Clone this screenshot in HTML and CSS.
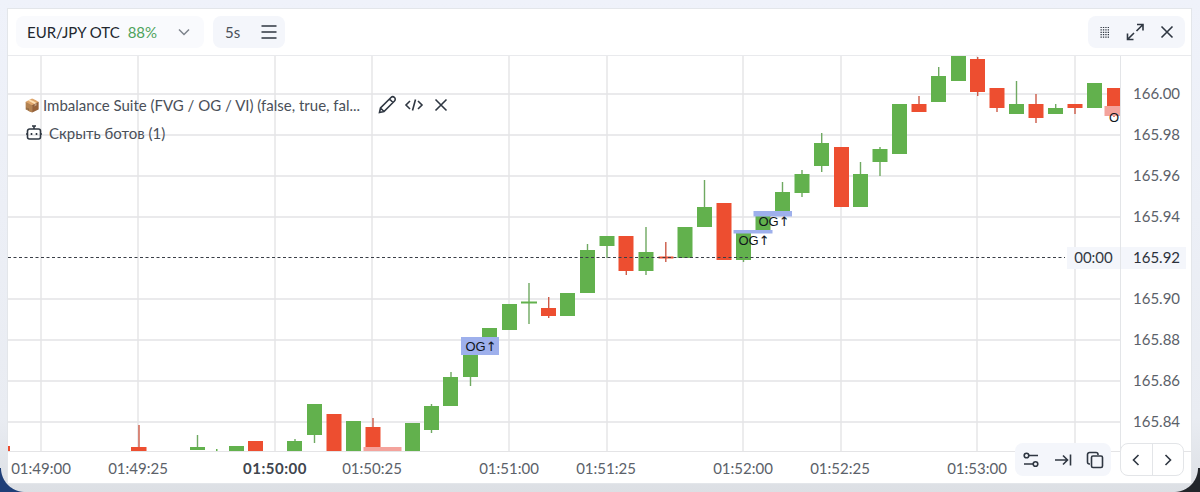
FILE: index.html
```html
<!DOCTYPE html>
<html lang="ru">
<head>
<meta charset="utf-8">
<title>Chart</title>
<link rel="stylesheet" href="styles.css">
</head>
<body>
<main class="panel">
  <header class="topbar">
    <div class="group asset">
      <span class="pair">EUR/JPY OTC</span>
      <span class="payout">88%</span>
      <svg class="chev" width="16" height="16" viewBox="0 0 16 16"><path d="M3 5.500 8 10.500 13 5.500"/></svg>
    </div>
    <div class="group interval">
      <span class="tf">5s</span>
      <svg class="ico" width="18" height="18" viewBox="0 0 18 18"><path d="M1.500 3h15M1.500 9h15M1.500 15h15"/></svg>
    </div>
    <div class="group winctl">
      <svg class="dots" width="10" height="11" viewBox="0 0 10 11"><path d="M.5.5h9M.5 2.900h9M.5 5.300h9M.5 7.700h9M.5 10.100h9"/></svg>
      <svg class="ico" width="18" height="18" viewBox="0 0 18 18"><path d="M11 1.500h6v6M17 1.500 10.500 8M1.500 10.500v6h6M1.500 16.500 8 10"/></svg>
      <svg class="ico" width="14" height="14" viewBox="0 0 14 14"><path d="M1.500 1.500l11 11M12.500 1.500l-11 11"/></svg>
    </div>
  </header>
  <div class="body">
    <div class="plot">
      <svg class="chart" width="1112" height="395" viewBox="8 56 1112 395">
        <g class="grid">
          <path d="M41 56V451M138 56V451M275 56V451M372 56V451M509 56V451M607 56V451M743 56V451M841 56V451M977 56V451M1075 56V451"/>
          <path d="M8 94H1121M8 135H1121M8 176H1121M8 217H1121M8 299H1121M8 340H1121M8 381H1121M8 422H1121"/>
        </g>
        <g class="up">
          <path class="w" d="M197.500 435V447M295 439V445M314.500 435V443M431.500 404V407M431.500 429V433M451 372V378M470.500 377V386M529 283V324M587.500 244V250M607 246V258M646 227V275M704.500 180V207M743.500 260V262M782.500 182V192M802 170V197M821.700 133V172M860.500 162V174M880 147V176M938.700 67V76M1016.500 81V104M1055.700 104V108"/>
          <rect x="190" y="447" width="15" height="3"/>
          <rect x="216" y="449" width="1.500" height="2"/>
          <rect x="229" y="446" width="15" height="5"/>
          <rect x="287" y="441" width="15" height="10"/>
          <rect x="307" y="404" width="15" height="31"/>
          <rect x="346" y="421" width="15" height="30"/>
          <rect x="405" y="423" width="15" height="28"/>
          <rect x="424" y="406" width="15" height="24"/>
          <rect x="443" y="377" width="15" height="29"/>
          <rect x="463" y="345" width="15" height="32"/>
          <rect x="482" y="328" width="15" height="20"/>
          <rect x="502" y="304" width="15" height="26"/>
          <rect x="521" y="301.500" width="16" height="2"/>
          <rect x="560" y="293" width="15" height="23"/>
          <rect x="580" y="250" width="15" height="43"/>
          <rect x="599.500" y="236" width="15" height="10"/>
          <rect x="638.500" y="252" width="15" height="19"/>
          <rect x="677.500" y="227" width="15" height="31"/>
          <rect x="697" y="207" width="15" height="20"/>
          <rect x="736" y="233" width="15" height="27"/>
          <rect x="755.500" y="216" width="15" height="14"/>
          <rect x="775" y="192" width="15" height="20"/>
          <rect x="794.500" y="174" width="15" height="19"/>
          <rect x="814" y="143" width="15" height="23"/>
          <rect x="853" y="174" width="15" height="33"/>
          <rect x="872.500" y="149" width="15" height="13"/>
          <rect x="892" y="104" width="15" height="50"/>
          <rect x="931" y="76" width="15" height="26"/>
          <rect x="951" y="56" width="15" height="25"/>
          <rect x="1009" y="104" width="15" height="10"/>
          <rect x="1048" y="108" width="15" height="6"/>
          <rect x="1087" y="83" width="15" height="25"/>
        </g>
        <g class="down">
          <path class="w" d="M139 425V447M373 418V427M548.700 297V318M626.300 270V275M665.800 242V262M977.700 57V96M919 96V104M997 108V112M1036 94V123M1075 108V114M1114 106V117"/>
          <rect x="8" y="446" width="2" height="5"/>
          <rect x="131" y="447" width="15.500" height="4"/>
          <rect x="248" y="441" width="15" height="10"/>
          <rect x="326.500" y="414" width="15" height="37"/>
          <rect x="365.500" y="427" width="15" height="24"/>
          <rect x="541" y="308" width="15" height="8"/>
          <rect x="618.500" y="236" width="15" height="35"/>
          <rect x="658.500" y="256.500" width="15" height="2"/>
          <rect x="716.500" y="203" width="15" height="57"/>
          <rect x="834" y="147" width="15" height="60"/>
          <rect x="911.500" y="104" width="15" height="8"/>
          <rect x="970" y="59" width="15" height="33"/>
          <rect x="989.500" y="88" width="15" height="20"/>
          <rect x="1028.500" y="104" width="15" height="14"/>
          <rect x="1067.500" y="104" width="15" height="4"/>
          <rect x="1107" y="88" width="14" height="18"/>
        </g>
        <g>
          <rect class="vi" x="363.500" y="447" width="38" height="4"/>
          <rect class="vi" x="1104.500" y="106" width="16.500" height="10"/>
          <rect class="og" x="461" y="337" width="38" height="18"/>
          <rect class="og" x="733.500" y="230" width="39" height="3.500"/>
          <rect class="og" x="753.500" y="211" width="38.500" height="5.500"/>
          <text class="lbl" x="465.500" y="351">OG<tspan class="arr">↑</tspan></text>
          <text class="lbl" x="738.500" y="245">OG<tspan class="arr">↑</tspan></text>
          <text class="lbl" x="758.500" y="226">OG<tspan class="arr">↑</tspan></text>
          <text class="lbl" x="1109" y="121.500">O</text>
        </g>
        <path class="last" d="M8 257.500H1065"/>
      </svg>
      <div class="legend">
        <div class="row indicator">
          <span class="emoji">📦</span>
          <span class="name">Imbalance Suite (FVG / OG / VI) (false, true, fal...</span>
          <svg class="ico pen" width="20" height="20" viewBox="0 0 20 20"><path d="M2.500 17.500 3.500 13 14 2.500a2 2 0 0 1 3.500 3.500L7 16.500zM12.500 4 16 7.500M3.500 13 7 16.500"/></svg>
          <svg class="ico code" width="20" height="20" viewBox="0 0 20 20"><path d="M6 6 2 10l4 4M14 6l4 4-4 4M11.500 4.500 8.500 15.500"/></svg>
          <svg class="ico shut" width="14" height="14" viewBox="0 0 14 14"><path d="M1.500 1.500l11 11M12.500 1.500l-11 11"/></svg>
        </div>
        <div class="row bots">
          <svg class="ico" width="18" height="18" viewBox="0 0 18 18"><path d="M4.500 5h9a2 2 0 0 1 2 2v6a2 2 0 0 1-2 2h-9a2 2 0 0 1-2-2V7a2 2 0 0 1 2-2zM9 5V2M7 2h4M1 10h1.500M15.500 10H17M6.500 9v2M11.500 9v2"/></svg>
          <span class="name">Скрыть ботов (1)</span>
        </div>
      </div>
      <span class="countdown">00:00</span>
    </div>
    <div class="prices">
      <span>166.00</span><span>165.98</span><span>165.96</span><span>165.94</span><span><i class="tag">165.92</i></span><span>165.90</span><span>165.88</span><span>165.86</span><span>165.84</span>
    </div>
  </div>
  <footer class="times">
    <span>01:49:00</span><span>01:49:25</span><b>01:50:00</b><span>01:50:25</span><span>01:51:00</span><span>01:51:25</span><span>01:52:00</span><span>01:52:25</span><span>01:53:00</span>
    <div class="tools">
      <div class="group toolset">
        <svg class="ico" width="18" height="18" viewBox="0 0 18 18"><circle cx="4.500" cy="4.500" r="2.300"/><circle cx="13.500" cy="13" r="2.300"/><path d="M7 4.500h9M2 13h9"/></svg>
        <svg class="ico" width="18" height="18" viewBox="0 0 18 18"><path d="M1 9h12M9 4.500 13.500 9 9 13.500M16.500 3.500v11"/></svg>
        <svg class="ico" width="18" height="18" viewBox="0 0 18 18"><path d="M4 13H3.500A2 2 0 0 1 1.500 11V3.500a2 2 0 0 1 2-2H10a2 2 0 0 1 2 2V4M7 5h8a1.500 1.500 0 0 1 1.500 1.500V15a1.500 1.500 0 0 1-1.500 1.500H7A1.500 1.500 0 0 1 5.500 15V6.500A1.500 1.500 0 0 1 7 5z"/></svg>
      </div>
      <div class="pager">
        <button class="nav"><svg class="ico" width="12" height="12" viewBox="0 0 12 12"><path d="M8.500 1 3.500 6l5 5"/></svg></button>
        <button class="nav"><svg class="ico" width="12" height="12" viewBox="0 0 12 12"><path d="M3.500 1l5 5-5 5"/></svg></button>
      </div>
    </div>
  </footer>
</main>
</body>
</html>
```
FILE: styles.css
```css
* { box-sizing: border-box; }
html, body { margin: 0; height: 492px; overflow: hidden; }
body {
  position: relative;
  padding: 8px 8px 8px 7px;
  background: linear-gradient(#eff2fa, #e9ecf2 85%, #dcdfe4);
  font-family: "Lato", "Noto Sans", sans-serif;
  color: #3f4650;
}
body::before, body::after {
  content: "";
  position: absolute;
  bottom: 0;
  width: 26px;
  height: 24px;
}
body::before {
  left: 0;
  background: radial-gradient(circle 24px at 25px 0, transparent 23.5px, #1f3f78 24.5px);
}
body::after {
  right: 0;
  background: radial-gradient(circle 24px at 0 0, transparent 23.5px, #23262b 24.5px);
}
.panel {
  position: relative;
  z-index: 1;
  width: 1185px; height: 476px;
  display: flex; flex-direction: column;
  background: #fff;
  border: 1px solid #e3e6ea;
}
.topbar {
  height: 47px; flex: none;
  display: flex; align-items: center;
  padding: 0 6px 0 8px;
  border-bottom: 1px solid #e9eaed;
}
.group { display: flex; align-items: center; background: #f4f6fb; border-radius: 8px; height: 32px; }
.asset { width: 188px; padding: 0 12px 0 11px; background: #f9fafd; }
.pair { font-size: 15px; color: #22272e; }
.payout { font-size: 15px; color: #4ea35c; margin-left: 8px; }
.chev { margin-left: auto; fill: none; stroke: #7d838c; stroke-width: 1.500; }
.interval { margin-left: 9px; width: 72px; padding-left: 12px; gap: 20px; }
.tf { font-size: 15px; color: #4a5059; }
.winctl { margin-left: auto; width: 97px; padding: 0 11px; justify-content: space-between; }
.ico { fill: none; stroke: #2f3742; stroke-width: 1.600; flex: none; }
.dots { fill: none; stroke: #2f3742; stroke-width: 1.200; stroke-dasharray: 1.300 1.100; margin-left: 1px; }
.body { flex: none; height: 395px; display: flex; }
.plot { position: relative; width: 1112px; height: 395px; flex: none; overflow: hidden; }
.chart { display: block; }
.grid path { fill: none; stroke: #e4e4e6; stroke-width: 1.400; }
.up rect { fill: #62b14d; }
.up .w { fill: none; stroke: #6fa961; stroke-width: 1.400; }
.down rect { fill: #ed4e30; }
.down .w { fill: none; stroke: #cc5a47; stroke-width: 1.400; }
.vi { fill: #f4a39c; }
.og { fill: #9eb0ec; }
.lbl { font-family: "Liberation Sans", sans-serif; font-size: 13px; fill: #10151c; }
.arr { font-family: "DejaVu Sans", sans-serif; }
.last { fill: none; stroke: #3a3f47; stroke-width: 1; stroke-dasharray: 3 2.500; }
.legend { position: absolute; left: 16px; top: 38px; display: flex; flex-direction: column; }
.row { display: flex; align-items: center; height: 24px; font-size: 15px; color: #4a5059; white-space: nowrap; }
.indicator { height: 22px; }
.emoji { font-size: 13px; width: 19px; font-family: "Noto Sans", sans-serif; color: #a9753f; }
.pen { margin-left: 17px; }
.code { margin-left: 7px; }
.shut { margin-left: 10px; }
.bots { margin-top: 5px; gap: 6px; padding-left: 1px; }
.countdown { position: absolute; right: 0; top: 191px; width: 53px; height: 22px; padding-bottom: 2px; background: #f4f6fb; font-size: 15px; color: #333942; display: flex; align-items: center; justify-content: center; }
.prices { flex: 1; border-left: 1px solid #e3e5e8; display: flex; flex-direction: column; padding-top: 16.500px; padding-left: 12px; }
.prices span { flex: none; height: 41px; display: flex; align-items: center; font-size: 15px; color: #5b6169; }
.tag { font-style: normal; height: 22px; width: 65px; margin: 2px 0 0 -12px; padding: 0 0 2px 12px; display: flex; align-items: center; background: #f4f6fb; color: #2b313a; }
.times {
  flex: 1; position: relative;
  border-top: 1px solid #e4e4e6;
}
.times span, .times b { position: absolute; top: 7px; font-size: 15px; color: #5b6169; transform: translateX(-50%); font-weight: 400; }
.times b { font-weight: 700; color: #40454d; letter-spacing: .5px; }
.times span:nth-child(1) { left: 33px; }
.times span:nth-child(2) { left: 130px; }
.times b:nth-child(3) { left: 267px; }
.times span:nth-child(4) { left: 364px; }
.times span:nth-child(5) { left: 501px; }
.times span:nth-child(6) { left: 598px; }
.times span:nth-child(7) { left: 735px; }
.times span:nth-child(8) { left: 832px; }
.times span:nth-child(9) { left: 969px; }
.tools { position: absolute; right: 7px; top: -9px; display: flex; align-items: center; gap: 9px; }
.toolset { width: 96px; height: 33px; padding: 0 7px; justify-content: space-between; }
.pager { display: flex; width: 64px; height: 33px; border: 1px solid #e3e5e8; border-radius: 8px; background: #fff; }
.nav { flex: 1; border: 0; background: none; padding: 0; display: flex; align-items: center; justify-content: center; }
.nav + .nav { border-left: 1px solid #e3e5e8; }
```
